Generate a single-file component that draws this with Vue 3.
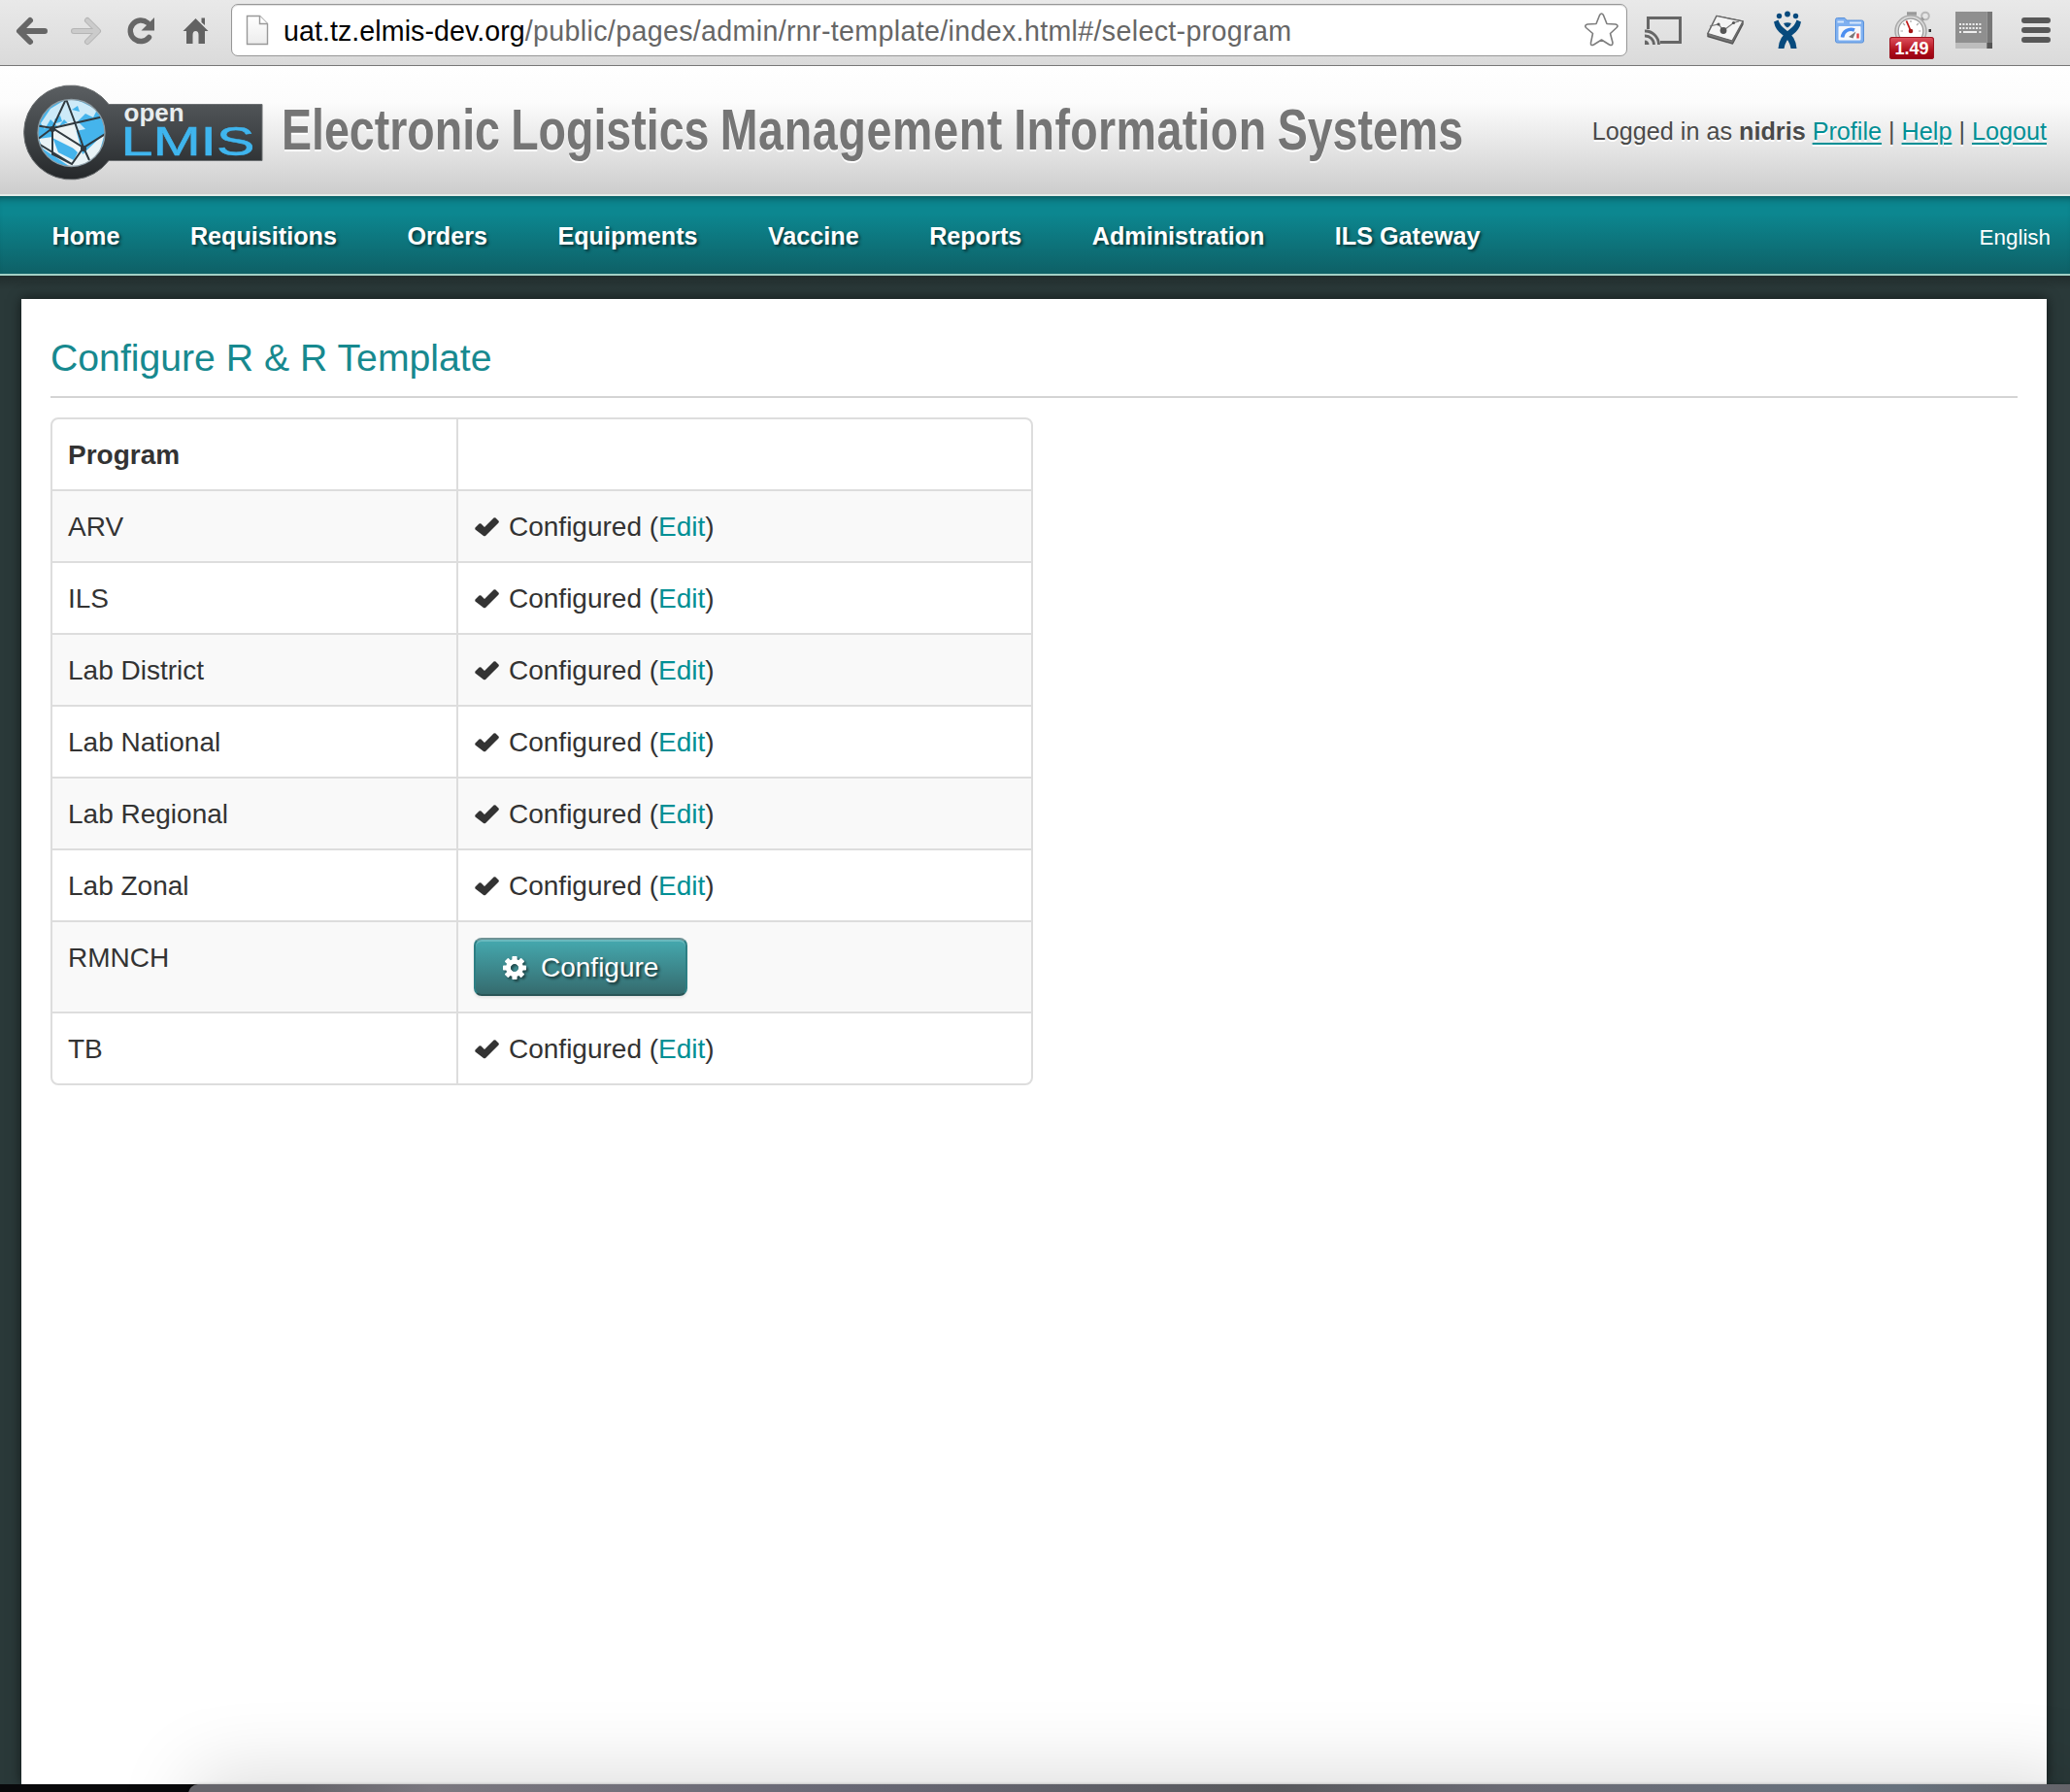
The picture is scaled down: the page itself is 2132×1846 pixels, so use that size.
<script setup>
const menu = ['Home', 'Requisitions', 'Orders', 'Equipments', 'Vaccine', 'Reports', 'Administration', 'ILS Gateway']

const programs = [
  { name: 'ARV', configured: true },
  { name: 'ILS', configured: true },
  { name: 'Lab District', configured: true },
  { name: 'Lab National', configured: true },
  { name: 'Lab Regional', configured: true },
  { name: 'Lab Zonal', configured: true },
  { name: 'RMNCH', configured: false },
  { name: 'TB', configured: true },
]

const teeth = [0, 45, 90, 135, 180, 225, 270, 315]
const keys = [0, 1, 2, 3, 4, 5, 6]
</script>

<template>
  <div class="screen">
    <div class="toolbar">
      <svg width="60" height="68" viewBox="0 0 60 68">
        <path d="M21 32H46M31 21L20 32L31 43" fill="none" stroke="#666" stroke-width="6" stroke-linecap="round" stroke-linejoin="round" />
      </svg>
      <svg width="58" height="68" viewBox="60 0 58 68">
        <path d="M76 32H100M90 21L101 32L90 43" fill="none" stroke="#b5b5b5" stroke-width="6" stroke-linecap="round" stroke-linejoin="round" />
        <path d="M76 32H100M90 21L101 32L90 43" fill="none" stroke="#cbcbcb" stroke-width="4" stroke-linecap="round" stroke-linejoin="round" />
      </svg>
      <svg width="56" height="68" viewBox="118 0 56 68">
        <path d="M153.500 38.500A10.800 10.800 0 1 1 152 23.500" fill="none" stroke="#666" stroke-width="5.500" stroke-linecap="round" />
        <path d="M159 18V31.500H145.500Z" fill="#666" />
      </svg>
      <svg width="64" height="68" viewBox="174 0 64 68">
        <path d="M201.500 19L214.500 32H211V45H204.500V36Q204.500 32 201.500 32T198.500 36V45H192V32H188.500ZM207.500 18.500H211V26L207.500 23Z" fill="#626262" />
      </svg>

      <div class="omnibox">
        <svg class="page" width="26" height="34" viewBox="0 0 26 34">
          <defs>
            <linearGradient id="sheet" x2="0" y2="1"><stop offset="0" stop-color="#fff" /><stop offset="1" stop-color="#ececec" /></linearGradient>
          </defs>
          <path d="M2.500 2.500H15.500L23.500 10.500V31.500H2.500Z" fill="url(#sheet)" stroke="#999" stroke-width="1.400" />
          <path d="M15.500 2.500V10.500H23.500" fill="#fff" stroke="#999" stroke-width="1.400" />
        </svg>
        <div class="url"><span class="host">uat.tz.elmis-dev.org</span><span>/public/pages/admin/rnr-template/index.html#/select-program</span></div>
        <svg class="star" width="38" height="38" viewBox="1631 12 38 38">
          <path d="M1647.600 15.500Q1649.500 12.500 1651.400 15.500L1655 24.500L1664 25Q1667.500 26 1665 28.500L1658.500 34.500L1661 44Q1661 47.500 1657.500 46L1649.500 41L1641.500 46Q1638 47.500 1638.500 44L1640.500 34.500L1633.500 28.500Q1631.500 26 1635 25L1644 24.500Z" fill="#fff" stroke="#7d7d7d" stroke-width="1.600" stroke-linejoin="round" />
        </svg>
      </div>

      <svg width="69" height="68" viewBox="1676 0 69 68">
        <path d="M1697.500 30V18.500H1730.500V43.500H1710" fill="none" stroke="#666" stroke-width="3" />
        <path d="M1694 32A14 14 0 0 1 1708.500 46M1694 37A9 9 0 0 1 1703.500 46" fill="none" stroke="#666" stroke-width="2.800" />
        <path d="M1694 41.500A4.500 4.500 0 0 1 1698.500 46H1694Z" fill="#666" />
      </svg>
      <svg width="67" height="68" viewBox="1745 0 67 68">
        <path d="M1768 16.500L1795 22V25L1784.500 45L1759 37.500V34.500Z" fill="#777" stroke="#555" stroke-width="1.400" stroke-linejoin="round" />
        <path d="M1768 16.500L1795 22L1784 42L1759 34.500Z" fill="#f4f4f4" stroke="#666" stroke-width="1.200" />
        <path d="M1761 27L1770 25L1775 31.500L1785.500 23.500L1791 22" fill="none" stroke="#777" stroke-width="1.200" />
        <circle cx="1775" cy="31.500" r="3.400" fill="#555" /><circle cx="1770" cy="25" r="1.600" fill="#555" /><circle cx="1785.500" cy="23.500" r="1.600" fill="#555" />
      </svg>
      <svg width="61" height="68" viewBox="1812 0 61 68">
        <g fill="#074a7d">
          <circle cx="1832.500" cy="16.500" r="2.700" /><circle cx="1841" cy="14.500" r="2.900" /><circle cx="1849.500" cy="16.500" r="2.700" />
          <path d="M1837 24Q1841 22.500 1845 24Q1843.500 27.500 1841 28.500Q1838.500 27.500 1837 24Z" />
          <path d="M1827 22.500L1831.500 20.500Q1833 26 1838.500 30Q1850 38 1850.500 50H1844.500Q1843 41 1836 36Q1828.500 31 1827 22.500Z" />
          <path d="M1855 22.500L1850.500 20.500Q1849 26 1843.500 30Q1832 38 1831.500 50H1837.500Q1839 41 1846 36Q1853.500 31 1855 22.500Z" />
        </g>
      </svg>
      <svg width="61" height="68" viewBox="1873 0 61 68">
        <path d="M1890.500 20.500Q1890.500 18.500 1892.500 18.500H1900L1902 21H1917.500Q1919.500 21 1919.500 23V42Q1919.500 44 1917.500 44H1892.500Q1890.500 44 1890.500 42Z" fill="#7fb0f0" stroke="#5b92da" />
        <path d="M1892.500 22.500H1899M1905 23.500H1917" stroke="#d4e5fb" stroke-width="2" />
        <rect x="1893.500" y="27" width="23" height="14.500" rx="1" fill="#f6f8fb" />
        <path d="M1897.500 38.500A9 9 0 0 1 1910 31" fill="none" stroke="#4d8ff0" stroke-width="3.600" />
        <path d="M1904 38L1911.500 32.500L1908.500 39.500Z" fill="#777" />
        <path d="M1913.500 34.500V39.500" stroke="#e54040" stroke-width="2.400" />
      </svg>
      <div class="extension">
        <svg width="69" height="68" viewBox="1934 0 69 68">
          <circle cx="1983" cy="16.500" r="3.800" fill="none" stroke="#b8b8b8" stroke-width="2" />
          <path d="M1964 14H1974M1977 22L1981 19" stroke="#999" stroke-width="3.500" />
          <circle cx="1968" cy="32" r="16" fill="#d8d8d8" stroke="#aaa" stroke-width="1.500" />
          <circle cx="1968" cy="32" r="12.800" fill="#fff" stroke="#999" stroke-width="1.200" />
          <path d="M1968 21V23M1957.500 32H1960M1976 32H1978.500M1960 24L1962 26M1976 24L1974 26" stroke="#aaa" stroke-width="1.200" />
          <path d="M1963.500 21.500L1968 32" stroke="#c01818" stroke-width="1.800" />
          <circle cx="1968" cy="32" r="2.300" fill="#a21515" />
          <path d="M1986.500 31.500H1989" stroke="#333" stroke-width="3" />
        </svg>
        <span class="badge">1.49</span>
      </div>
      <svg width="64" height="68" viewBox="2003 0 64 68">
        <path d="M2014 12H2046.500V44H2014Z" fill="#8f8f8f" />
        <path d="M2014 44H2046.500V50H2014Z" fill="#bdbdbd" />
        <path d="M2046.500 12H2052V50H2046.500Z" fill="#777" />
        <path d="M2046.500 44H2052V50H2046.500Z" fill="#555" />
        <g fill="#eee">
          <rect v-for="k in keys" :key="'a' + k" :x="2018 + k * 3.4" y="24" width="2" height="2" />
          <rect v-for="k in keys" :key="'b' + k" :x="2018 + k * 3.4" y="28" width="2" height="2" />
          <path d="M2018 32H2020V34H2018ZM2022 32H2036V34H2022ZM2038.400 32H2040.400V34H2038.400Z" />
        </g>
      </svg>
      <svg width="65" height="68" viewBox="2067 0 65 68">
        <path d="M2085 21H2109M2085 31H2109M2085 41H2109" stroke="#575757" stroke-width="6" stroke-linecap="round" />
      </svg>
    </div>

    <header class="header">
      <svg class="logo" width="250" height="100" viewBox="22 86 250 100">
        <defs>
          <linearGradient id="plate" gradientUnits="userSpaceOnUse" x1="0" y1="88" x2="0" y2="184">
            <stop offset="0" stop-color="#5a5e61" /><stop offset="0.500" stop-color="#414548" /><stop offset="1" stop-color="#25282a" />
          </linearGradient>
          <clipPath id="globe"><circle cx="73.500" cy="136" r="34.500" /></clipPath>
        </defs>
        <path d="M112 106.500H270V164.500H112A48.500 48.500 0 1 1 112 106.500Z" fill="url(#plate)" stroke="#6d7173" />
        <circle cx="73.500" cy="136" r="34.500" fill="#45b4ec" />
        <g clip-path="url(#globe)">
          <path d="M52 111L70 100L84 104L100 112L96 120L88 116L80 124L88 132L78 134L66 122L60 130L52 122L46 132L42 126Z" fill="#cdeaf8" />
          <path d="M54 131L76 124L85 158L108 136L100 164L74 172L44 152L40 142L54 140L60 156L76 164L80 156Z" fill="#e9f3f6" />
          <path d="M54 132L73 124L84 156L54 141Z" fill="#eef4f5" />
          <path d="M56 122L62 118L64 124L58 126ZM74 112L80 108L82 114Z" fill="#45b4ec" />
          <path d="M90 124L100 120L106 132L98 144L92 136Z" fill="#45b4ec" />
          <path d="M68 101L54 131L107 119M68 101L76 122L86 151M36 128L54 131L86 151L110 136M54 131L54 158L74 168L86 151M38 143L54 131M74 168L38 146M86 151L92 164" fill="none" stroke="#303a40" stroke-width="2" />
          <circle cx="54" cy="132" r="3" fill="#303a40" /><circle cx="86" cy="152" r="3" fill="#303a40" />
        </g>
        <circle cx="73.500" cy="136" r="34.500" fill="none" stroke="#8f9ea6" stroke-width="1.300" />
        <text class="logo-open" x="127.500" y="124">open</text>
        <text class="logo-lmis" transform="translate(124.500 158.500) scale(1.375 1)">LMIS</text>
      </svg>
      <h1>Electronic Logistics <span class="wide">Management</span> <span class="wider">Information</span> Systems</h1>
      <div class="account">Logged in as <strong>nidris</strong> <a>Profile</a> | <a>Help</a> | <a>Logout</a></div>
    </header>

    <nav class="nav">
      <a v-for="item in menu" :key="item">{{ item }}</a>
      <span class="language">English</span>
    </nav>

    <main class="body">
      <section class="panel">
        <h2>Configure R &amp; R Template</h2>
        <div class="table">
          <div class="row">
            <div class="cell name"><strong>Program</strong></div>
            <div class="cell"></div>
          </div>
          <div v-for="(p, i) in programs" :key="p.name" class="row" :class="{ shaded: i % 2 === 0 }">
            <div class="cell name">{{ p.name }}</div>
            <div class="cell">
              <template v-if="p.configured">
                <svg class="check" width="36" height="40" viewBox="0 0 36 40"><path d="M1.500 20.500L5.500 16.500Q6.500 15.800 7.500 16.500L11 20L20.500 10.500Q21.500 9.800 22.500 10.500L25.500 13.500Q26.200 14.500 25.500 15.500L12 29Q11 29.700 10 29L1.500 22.500Q1 21.500 1.500 20.500Z" fill="#333" /></svg>
                <span>Configured (<a>Edit</a>)</span>
              </template>
              <button v-else class="configure">
                <svg width="26" height="26" viewBox="-13 -13 26 26">
                  <rect v-for="a in teeth" :key="a" x="-2.600" y="-12" width="5.200" height="8" rx="0.800" :transform="`rotate(${a})`" fill="#fff" />
                  <circle r="6.600" fill="none" stroke="#fff" stroke-width="5" />
                </svg>
                <span>Configure</span>
              </button>
            </div>
          </div>
        </div>
      </section>
    </main>

    <div class="desktop"><div class="window"></div></div>
  </div>
</template>

<style>
body {
  margin: 0;
}
</style>

<style scoped>
.screen {
  width: 2132px;
  height: 1846px;
  overflow: hidden;
  display: flex;
  flex-direction: column;
  background: #2a3939;
  color: #333;
  font-family: "Liberation Sans", Arial, sans-serif;
  font-size: 28px;
}
.screen svg {
  display: block;
  flex: none;
}
.toolbar {
  box-sizing: border-box;
  height: 68px;
  flex: none;
  display: flex;
  background: linear-gradient(#e9e9e9, #dadada);
  box-shadow: inset 0 -1px #777;
}
.omnibox {
  flex: 1;
  box-sizing: border-box;
  height: 54px;
  margin-top: 4px;
  border: 1px solid #979797;
  border-radius: 7px;
  background: #fff;
  box-shadow: inset 0 1px 1px #ddd;
  display: flex;
  align-items: center;
  padding: 0 6px 0 13px;
}
.url {
  flex: 1;
  margin-left: 14px;
  padding-top: 2px;
  font-size: 28.600px;
  line-height: 36px;
  letter-spacing: 0.345px;
  color: #666;
  white-space: nowrap;
}
.host {
  color: #000;
  letter-spacing: 0.070px;
}
.extension {
  position: relative;
}
.badge {
  position: absolute;
  left: 12px;
  top: 38px;
  width: 46px;
  height: 23px;
  border-radius: 3px;
  background: linear-gradient(#e0525f, #b0101c 60%, #960010);
  box-shadow: inset 0 0 0 1px #9d1520;
  color: #fff;
  font-size: 18px;
  font-weight: bold;
  line-height: 25px;
  text-align: center;
}
.header {
  box-sizing: border-box;
  height: 134px;
  flex: none;
  display: flex;
  align-items: center;
  padding: 0 24px 0 22px;
  border-bottom: 2px solid #e3ebe8;
  background: linear-gradient(#fff 0%, #fcfcfc 28%, #f6f6f6 38%, #cdcdcd 100%);
}
.logo {
  margin-top: 6px;
}
.logo-open {
  font-size: 26px;
  font-weight: bold;
  fill: #e8ecee;
}
.logo-lmis {
  font-size: 43px;
  fill: #3fb5ee;
  stroke: #3fb5ee;
  stroke-width: 0.6px;
}
h1 {
  width: 1216px;
  margin: 0 0 0 17.500px;
  font-size: 59.500px;
  line-height: 80px;
  font-weight: bold;
  color: #757575;
  word-spacing: -2.200px;
  white-space: nowrap;
  text-shadow: 0 2px 0 #fff;
  transform: scaleX(0.782);
  transform-origin: left;
}
.wide {
  letter-spacing: 0.900px;
}
.wider {
  letter-spacing: 0.500px;
}
.account {
  margin-left: auto;
  padding-top: 2px;
  font-size: 25.200px;
  color: #4a4a4a;
  text-shadow: 0 2px 0 #fff;
  white-space: nowrap;
}
.account a {
  color: #008f95;
  text-decoration: underline;
  text-decoration-thickness: 2px;
  text-underline-offset: 3px;
}
.nav {
  box-sizing: border-box;
  height: 82px;
  flex: none;
  display: flex;
  align-items: baseline;
  gap: 72.400px;
  padding: 0 20px 0 53.500px;
  line-height: 82px;
  border-bottom: 2px solid #a3d0c5;
  background: linear-gradient(#0c8790 0%, #0c8790 22%, #0e6066 100%);
  box-shadow: inset 0 8px 8px -7px rgba(0, 0, 0, 0.5);
  color: #fff;
  font-size: 25.200px;
  font-weight: bold;
  text-shadow: 2px 2px 3px rgba(0, 0, 0, 0.55);
  white-space: nowrap;
}
.language {
  margin-left: auto;
  font-size: 22.400px;
  font-weight: normal;
  text-shadow: none;
}
.body {
  flex: 1;
  display: flex;
  padding: 24px 24px 0 22px;
  background: linear-gradient(#222d2d, #2a3939 14px);
}
.panel {
  flex: 1;
  padding: 0 30px;
  background: #fff;
  box-shadow: 0 0 12px rgba(0, 0, 0, 0.6);
}
h2 {
  box-sizing: border-box;
  height: 102px;
  margin: 0 0 20px;
  padding-top: 38px;
  border-bottom: 2px solid #d4d4d4;
  color: #17898f;
  font-size: 39.200px;
  font-weight: normal;
  line-height: 46px;
}
.table {
  box-sizing: border-box;
  width: 1012px;
  border: 2px solid #ddd;
  border-radius: 8px;
  overflow: hidden;
}
.row {
  display: flex;
}
.row + .row {
  border-top: 2px solid #ddd;
}
.shaded {
  background: #f9f9f9;
}
.cell {
  flex: 1;
  display: flex;
  padding: 17px 16px 15px;
  line-height: 40px;
}
.cell.name {
  box-sizing: border-box;
  flex: none;
  width: 418px;
  border-right: 2px solid #ddd;
}
.cell a {
  color: #008f95;
}
.configure {
  display: flex;
  align-items: center;
  gap: 14px;
  box-sizing: border-box;
  width: 220px;
  height: 60px;
  margin: -1px 0 1px;
  padding: 1px 0 0 29px;
  border: 2px solid;
  border-color: #6f9295 #2e7f84 #2a5557;
  border-radius: 8px;
  background: linear-gradient(#45a9af, #356b6e);
  box-shadow: inset 0 2px 0 rgba(255, 255, 255, 0.2), 0 2px 3px rgba(0, 0, 0, 0.08);
  color: #fff;
  font: 28px "Liberation Sans", Arial, sans-serif;
  text-shadow: 2px 2px 3px rgba(0, 0, 0, 0.65);
}
.configure svg {
  margin-left: -2px;
  filter: drop-shadow(2px 2px 1px rgba(0, 0, 0, 0.45));
}
.desktop {
  height: 8px;
  flex: none;
  padding-left: 194px;
  background: #09090b;
}
.window {
  height: 400px;
  border-radius: 10px 0 0 0;
  background: linear-gradient(90deg, #66656b, #66656b 6%, #7b7880 13%, #686875 35%, #58595d 58%, #6b6b75 70%, #67727e 91%, #646369);
  box-shadow: 0 0 3px rgba(0, 0, 0, 0.3), 6px -10px 80px rgba(0, 0, 0, 0.145);
}
</style>
